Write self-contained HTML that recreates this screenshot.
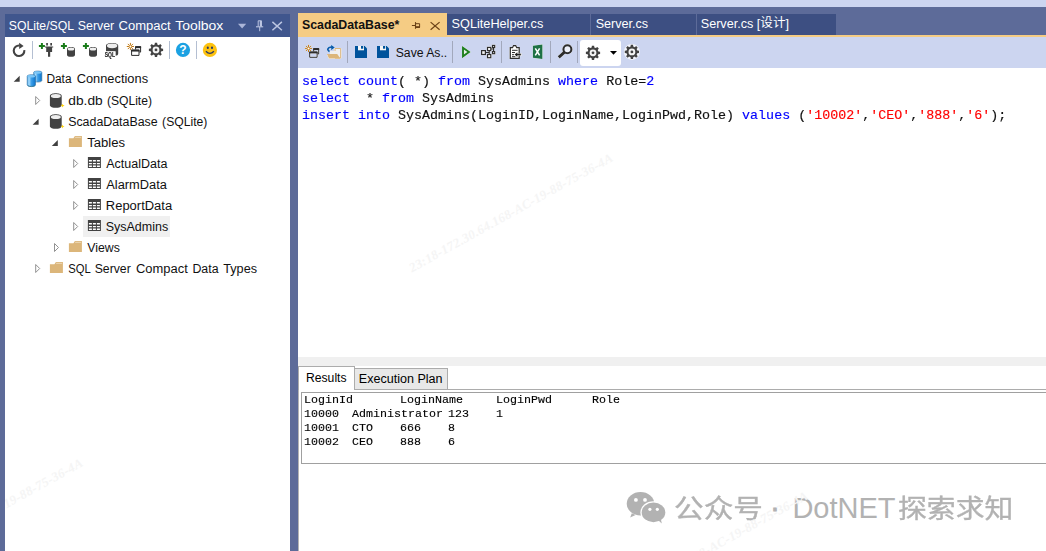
<!DOCTYPE html>
<html lang="zh">
<head>
<meta charset="utf-8">
<title>SQLite/SQL Server Compact Toolbox</title>
<style>
html,body{margin:0;padding:0;}
body{width:1046px;height:551px;overflow:hidden;position:relative;background:#5d6b99;
  font-family:"Liberation Sans","Noto Sans CJK SC",sans-serif;font-size:12px;color:#111;}
.abs{position:absolute;}
.t{position:absolute;white-space:pre;line-height:16px;transform-origin:0 0;}
.lbl{position:absolute;left:0;top:0;width:0;height:0;}
svg{position:absolute;overflow:visible;}
#topstrip{left:0;top:0;width:1046px;height:7px;background:#ccd5f0;}
#lp-title{left:5px;top:14px;width:285px;height:23px;background:#40568d;}
#lp-body{left:5px;top:37px;width:285px;height:514px;background:#fff;}
#ed-toolbar{left:298px;top:37px;width:748px;height:31px;background:#ccd5f0;}
#ed-body{left:298px;top:68px;width:748px;height:483px;background:#fff;}
#tabline{left:298px;top:35px;width:748px;height:2px;background:#f5cc84;}
.tab{position:absolute;top:14px;height:21px;background:#3d4f82;}
#tab1{left:298px;top:13px;width:149px;height:24px;background:#f5cc84;}
.code{font-family:"Liberation Mono",monospace;font-size:12.75px;line-height:17px;left:301.5px;transform:scaleX(1.0458);-webkit-text-stroke:0.15px;}
.kw{color:#0000ff;}
.str{color:#ff0000;}
.res{font-family:"Liberation Mono",monospace;font-size:11px;line-height:14px;color:#000;transform:scaleX(1.0606);-webkit-text-stroke:0.12px;}
.sep{position:absolute;width:1px;background:#8e9bbc;}
.wx{font-size:28.5px;line-height:40px;color:#b2b2b2;-webkit-text-stroke:0.35px #b2b2b2;}
.wm{position:absolute;white-space:pre;font-family:"Liberation Serif",serif;font-style:italic;font-weight:bold;font-size:13px;line-height:14px;letter-spacing:0.3px;color:#f5f5f5;transform-origin:0 50%;transform:rotate(-29deg);}
</style>
</head>
<body>
<div id="topstrip" class="abs"></div>

<!-- left tool window -->
<div id="lp-title" class="abs"></div>
<div id="lp-body" class="abs"></div>
<div id="selrow" class="abs" style="left:83px;top:216px;width:87px;height:21px;background:#f0f0f0;"></div>

<!-- editor -->
<div id="ed-toolbar" class="abs"></div>
<div id="ed-body" class="abs"></div>
<div id="tabline" class="abs"></div>
<div id="tab1" class="abs"></div>
<div id="tab2" class="tab" style="left:447px;width:143px;"></div>
<div id="tab3" class="tab" style="left:591px;width:105px;"></div>
<div id="tab4" class="tab" style="left:697px;width:139px;"></div>

<!-- results chrome -->
<div id="splitter" class="abs" style="left:298px;top:357px;width:748px;height:9px;background:#f0f0f0;"></div>
<div id="rleft" class="abs" style="left:298px;top:366px;width:1px;height:185px;background:#b4b4b4;"></div>
<div id="rtabline" class="abs" style="left:298px;top:389px;width:748px;height:1px;background:#acacac;"></div>
<div id="rtab2" class="abs" style="left:354px;top:368px;width:94px;height:21px;background:#e8e8e8;border:1px solid #acacac;border-bottom:none;box-sizing:border-box;"></div>
<div id="rtab1" class="abs" style="left:298px;top:366px;width:57px;height:24px;background:#fff;border:1px solid #acacac;border-bottom:none;box-sizing:border-box;"></div>
<div id="rbox" class="abs" style="left:301px;top:392px;width:760px;height:72px;background:#fff;border:1px solid #a0a0a0;box-sizing:border-box;"></div>

<svg id="icons" width="1046" height="551" viewBox="0 0 1046 551" style="left:0;top:0;">
<defs>
  <linearGradient id="cylg" x1="0" y1="0" x2="1" y2="0">
    <stop offset="0" stop-color="#4aa6ea"/><stop offset="0.22" stop-color="#a9dcfc"/><stop offset="0.5" stop-color="#3c9fe9"/><stop offset="1" stop-color="#0b74cc"/>
  </linearGradient>
  <g id="gear">
    <path fill="#424242" d="M-1.33 -5.34 L-1.13 -7.11 L1.13 -7.11 L1.33 -5.34 L2.84 -4.71 L4.23 -5.82 L5.82 -4.23 L4.71 -2.84 L5.34 -1.33 L7.11 -1.13 L7.11 1.13 L5.34 1.33 L4.71 2.84 L5.82 4.23 L4.23 5.82 L2.84 4.71 L1.33 5.34 L1.13 7.11 L-1.13 7.11 L-1.33 5.34 L-2.84 4.71 L-4.23 5.82 L-5.82 4.23 L-4.71 2.84 L-5.34 1.33 L-7.11 1.13 L-7.11 -1.13 L-5.34 -1.33 L-4.71 -2.84 L-5.82 -4.23 L-4.23 -5.82 L-2.84 -4.71Z"/>
    <circle r="3.4" fill="#f4f4f4"/>
    <circle r="1.4" fill="#424242"/>
  </g>
  <g id="plus"><path fill="#1a7c1a" d="M-1 -3H1V-1H3V1H1V3H-1V1H-3V-1H-1Z"/></g>
  <g id="cyl">
    <path fill="#424242" d="M0 2 C0 -0.6 8 -0.6 8 2 V8 C8 10.6 0 10.6 0 8Z"/>
    <ellipse cx="4" cy="2" rx="3.3" ry="1.5" fill="#f0f0f0"/>
  </g>
  <g id="dbicon">
    <path fill="#424242" d="M0 2.6 C0 -0.8 11.8 -0.8 11.8 2.6 V12 C11.8 15.4 0 15.4 0 12Z"/>
    <ellipse cx="5.9" cy="2.7" rx="5" ry="2" fill="#eeeeee"/>
    <path fill="#ffd20a" d="M12.7 10.4L13.3 11.7L14.7 12.3L13.3 12.9L12.7 14.2L12.1 12.9L10.7 12.3L12.1 11.7Z"/>
  </g>
  <g id="tbl">
    <rect x="0" y="0" width="13" height="11" fill="#424242"/>
    <path fill="#fff" d="M1 3H4V4.6H1Z M5 3H8V4.6H5Z M9 3H12V4.6H9Z M1 5.9H4V7.3H1Z M5 5.9H8V7.3H5Z M9 5.9H12V7.3H9Z M1 8.5H4V10H1Z M5 8.5H8V10H5Z M9 8.5H12V10H9Z"/>
  </g>
  <g id="folder"><path fill="#dcb67a" d="M0 2.2H4.5L6 0H13V11H0Z"/><path fill="#f3e6cf" d="M6.2 0.9H12.2V1.6H6.2Z"/></g>
  <g id="exp"><path fill="#404040" d="M6 0V6H0Z"/></g>
  <g id="col"><path fill="#fff" stroke="#929292" stroke-width="1" d="M0.5 0.5L4.5 4.5L0.5 8.5Z"/></g>
  <g id="newwin">
    <g stroke="#c27d1a" stroke-width="1" stroke-linecap="butt">
      <path d="M0 -3.6V3.6M-3.6 0H3.6M-2.6 -2.6L2.6 2.6M-2.6 2.6L2.6 -2.6"/>
    </g>
    <circle r="1" fill="#fff"/>
    <path fill="none" stroke="#2d2d2d" stroke-width="1" d="M5.2 3V0.2H10.2V5.6H9"/>
    <path stroke="#2d2d2d" stroke-width="1.9" d="M4.7 0.7H10.7"/>
    <path fill="none" stroke="#2d2d2d" stroke-width="1" d="M1.2 3.6H8.6V8.9H1.2Z"/>
    <path stroke="#2d2d2d" stroke-width="1.9" d="M0.7 4.1H9.1"/>
  </g>
  <g id="save">
    <path fill="#00539c" d="M0 0H9.8L12 2.2V12H0Z"/>
    <path fill="#f6f6f6" d="M3 0H9V4.3H3Z"/>
    <path fill="#00539c" d="M6 0H8.2V2.7H6Z"/>
  </g>
</defs>

<!-- left title bar icons -->
<g fill="#aab5d8" stroke="none">
  <path d="M238 23.8H246.2L242.1 28.4Z"/>
</g>
<g fill="none" stroke="#bcc6e2" stroke-width="1">
  <path d="M258.2 26.5V20.8H261.4V26.5"/>
  <path d="M260.8 20.8V26.5" stroke-width="2"/>
  <path d="M256 26.8H263.2" stroke-width="1.1"/>
  <path d="M259.7 27V31.2"/>
  <path d="M272.4 21.9L281.9 30.3M281.9 21.9L272.4 30.3" stroke-width="1.45"/>
</g>

<!-- left toolbar -->
<g>
  <path fill="none" stroke="#424242" stroke-width="2.1" d="M19.6 45.5A5.3 5.3 0 1 0 24.3 50.2"/>
  <path fill="#424242" d="M19.2 42.7V49L23.6 45.9Z"/>
  <rect x="32" y="41" width="1" height="18" fill="#b4bfd2"/>
  <!-- plug -->
  <use href="#plus" x="41.9" y="46"/>
  <path fill="#424242" d="M46.2 43H47.9V45.6H46.2Z M50.3 43H52V45.6H50.3Z M45 46.5H53.2V47.5H45Z M46.2 47.5H52.1V52H46.2Z M48 52H50.2V56.7H48Z"/>
  <!-- db+ x2 -->
  <use href="#plus" x="63.9" y="46"/>
  <use href="#cyl" x="67" y="46.9"/>
  <use href="#plus" x="85.9" y="46"/>
  <use href="#cyl" x="89" y="46.9"/>
  <!-- sql db -->
  <path fill="#424242" d="M106 45.6C106 42.2 118.2 42.2 118.2 45.6V53.5C118.2 55 117 55.6 115.6 55.8V51.3H106Z"/>
  <ellipse cx="112.1" cy="45.8" rx="5.2" ry="2.4" fill="#eeeeee"/>
  <rect x="104.2" y="51.6" width="11" height="5.8" fill="#fff"/><text x="104.7" y="57" font-family="Liberation Sans, sans-serif" font-weight="bold" font-size="6.4" fill="#1e1e1e" stroke="#1e1e1e" stroke-width="0.15" textLength="10.3" lengthAdjust="spacingAndGlyphs" style="filter:grayscale(1);">SQL</text>
  <!-- new window -->
  <use href="#newwin" x="130.4" y="46.5"/>
  <!-- gear -->
  <use href="#gear" x="156" y="49.9"/>
  <rect x="169" y="41" width="1" height="18" fill="#b4bfd2"/>
  <!-- help -->
  <circle cx="183" cy="49.9" r="7.1" fill="#1ba1e2"/>
  <text x="183" y="54.2" text-anchor="middle" font-family="Liberation Sans, sans-serif" font-weight="bold" font-size="12" fill="#fff">?</text>
  <rect x="196" y="41" width="1" height="18" fill="#b4bfd2"/>
  <!-- smiley -->
  <circle cx="209.9" cy="49.9" r="7.1" fill="#fdc20f"/>
  <ellipse cx="207.8" cy="47.8" rx="1.05" ry="1.3" fill="#2b3a67"/>
  <ellipse cx="212" cy="47.8" rx="1.05" ry="1.3" fill="#2b3a67"/>
  <path fill="none" stroke="#2b3a67" stroke-width="1.3" d="M205.9 51.3Q209.9 55.6 213.9 51.3"/>
</g>

<!-- tree icons -->
<g>
  <use href="#exp" x="13.7" y="75.8"/>
  <!-- data connections icon -->
  <g stroke="#2c6c9c" stroke-width="0.6">
    <path fill="url(#cylg)" d="M33.7 72.4C33.7 70.6 41.8 70.6 41.8 72.4V80.6C41.8 82.5 33.7 82.5 33.7 80.6Z"/>
    <ellipse cx="37.75" cy="72.5" rx="3.8" ry="1.2" fill="#7cc6f6" stroke="none"/>
    <path fill="url(#cylg)" d="M27.2 76.2C27.2 74.3 35.5 74.3 35.5 76.2V84.9C35.5 87 27.2 87 27.2 84.9Z"/>
    <ellipse cx="31.35" cy="76.3" rx="3.9" ry="1.2" fill="#7cc6f6" stroke="none"/>
  </g>
  <path fill="none" stroke="#3b8099" stroke-width="0.9" d="M28 85.6C29.5 86.9 33.3 86.9 34.8 85.6"/>

  <use href="#col" x="35.2" y="96"/>
  <use href="#dbicon" x="49.9" y="93.3"/>
  <use href="#exp" x="32.6" y="118.8"/>
  <use href="#dbicon" x="49.9" y="114.2"/>

  <use href="#exp" x="51.8" y="140"/>
  <use href="#folder" x="68.9" y="136"/>

  <use href="#col" x="73.2" y="159"/>
  <use href="#tbl" x="87.9" y="157"/>
  <use href="#col" x="73.2" y="180"/>
  <use href="#tbl" x="87.9" y="178"/>
  <use href="#col" x="73.2" y="201"/>
  <use href="#tbl" x="87.9" y="199"/>
  <use href="#col" x="73.2" y="222"/>
  <use href="#tbl" x="87.9" y="220"/>

  <use href="#col" x="54" y="243"/>
  <use href="#folder" x="68.9" y="241"/>
  <use href="#col" x="35.2" y="264"/>
  <use href="#folder" x="49.9" y="262"/>
</g>

<!-- active tab icons -->
<g fill="none" stroke="#6b4217" stroke-width="1">
  <path d="M411.9 25.5H415.3"/>
  <path d="M415.5 22.1V28.8" stroke-width="1.1"/>
  <path d="M415.5 23.7H419.6V27.2H415.5"/>
  <path d="M415.5 27.1H419.9" stroke-width="1.7"/>
  <path d="M430.6 22.1L439.6 29.8M439.6 22.1L430.6 29.8" stroke-width="1.2"/>
</g>

<!-- editor toolbar -->
<g style="filter:drop-shadow(0 0 0.5px #fff) drop-shadow(0 0 0.6px #fff);">
  <use href="#newwin" x="308.5" y="48.4"/>
  <!-- open folder -->
  <path fill="#f0f0f0" stroke="#dcb67a" stroke-width="1" d="M335 48.5H340.7V58.1H335Z"/>
  <path fill="#f0f0f0" d="M330 51H336V55H330Z"/>
  <path fill="#dcb67a" d="M326.9 54H337.2L340.4 58.6H329Z"/>
  <path fill="none" stroke="#0b5cad" stroke-width="1.8" d="M329.6 51.6C326 49.6 328.5 46.6 332 47.2"/>
  <path fill="#0b5cad" d="M331.2 44.7L334.8 47.5L331.2 50.2Z"/>
  <!-- save x2 -->
  <use href="#save" x="355" y="46"/>
  <use href="#save" x="377" y="46"/>
  <!-- play -->
  <path fill="#e6efe6" stroke="#1e7f1e" stroke-width="1.9" stroke-linejoin="miter" d="M463 47.8L469 52L463 56.3Z"/>
  <!-- diagram -->
  <g fill="#f4f4f4" stroke="#2d2d2d" stroke-width="1.2">
    <path fill="none" d="M485.6 52.5H489.2M489.2 50.7V54.4M491 49H493.6V47.5M493.6 47.5V51.5"/>
    <rect x="481.6" y="50.6" width="3.8" height="3.9"/>
    <rect x="487.5" y="47.4" width="3.3" height="3.2"/>
    <rect x="487.5" y="54.5" width="3.3" height="3.2"/>
    <rect x="492.5" y="45.4" width="2.2" height="2.1"/>
    <rect x="492.5" y="51.6" width="2.2" height="2.1"/>
  </g>
  <!-- clipboard -->
  <path fill="#fff" stroke="#2d2d2d" stroke-width="1.25" d="M510.3 47.7H512.5L513.5 45.5H515.7L516.7 47.7H519.2V58.3H510.3Z"/>
  <path fill="none" stroke="#2d2d2d" stroke-width="1" d="M512 50.3H517.6M512 52.5H515M512 54.7H514M512 56.7H515.4"/>
  <path fill="#1e1e1e" stroke="#fff" stroke-width="0.4" d="M514.4 54.6L517.5 51.9V53.6H521.2V55.6H517.5V57.3Z"/>
  <!-- excel -->
  <path fill="#1e7145" d="M532.9 45.7L542.4 44.6V58.9L532.9 57.8Z"/>
  <path fill="none" stroke="#fff" stroke-width="1.5" d="M535.3 48.4L539.6 55.4M539.6 48.4L535.3 55.4"/>
  <!-- magnifier -->
  <circle cx="567.4" cy="49.2" r="4" fill="#eef1fa" stroke="#2d2d2d" stroke-width="2.1"/>
  <path stroke="#2d2d2d" stroke-width="2.9" stroke-linecap="butt" d="M564.5 52.2L558.7 57.3"/>
</g>
<g fill="#a2a8bc">
  <rect x="347" y="41" width="1" height="22"/>
  <rect x="452" y="41" width="1" height="22"/>
  <rect x="501" y="41" width="1" height="22"/>
  <rect x="550" y="41" width="1" height="22"/>
  <rect x="577" y="41" width="1" height="22"/>
</g>
<rect x="580" y="40" width="41" height="26" rx="3" ry="3" fill="#fff"/>
<use href="#gear" x="593" y="52.8"/>
<path fill="#000" d="M610 51H613.5L617 51L613.5 54.8Z"/>
<circle cx="631.9" cy="51.9" r="8" fill="#f2f4fb"/>
<use href="#gear" x="631.9" y="51.9"/>

<!-- wechat -->
<g fill="#b2b2b2">
  <path d="M631.8 513.2L630.2 517.6L635.6 514.9Z"/>
  <ellipse cx="640.5" cy="503.7" rx="13.8" ry="11.7"/>
  <ellipse cx="653.5" cy="512.4" rx="13.1" ry="11.1" fill="#fff"/>
  <ellipse cx="653.5" cy="512.4" rx="11.8" ry="9.8"/>
  <path d="M658.5 520.6L661.8 523.4L660.9 519.2Z"/>
  <circle cx="635.9" cy="499.9" r="1.9" fill="#fff"/>
  <circle cx="645" cy="499.9" r="1.9" fill="#fff"/>
  <circle cx="649.9" cy="509.3" r="1.6" fill="#fff"/>
  <circle cx="657.3" cy="509.3" r="1.6" fill="#fff"/>
</g>
</svg>

<div class="lbl"><span id="ttl1" class="t" style="left:8px;top:18px;transform:translate(0.71px,0.10px) scaleX(1.0206);color:#fff;">SQLite/SQL</span> <span id="ttl2" class="t" style="left:77px;top:18px;transform:translate(0.74px,0.10px) scaleX(1.0317);color:#fff;">Server</span> <span id="ttl3" class="t" style="left:118px;top:18px;transform:translate(0.58px,0.10px) scaleX(1.0848);color:#fff;">Compact</span> <span id="ttl4" class="t" style="left:175px;top:18px;transform:translate(0.19px,0.10px) scaleX(1.1636);color:#fff;">Toolbox</span></div>
<div class="lbl"><span id="n0a" class="t" style="left:46px;top:71px;transform:translate(0.39px,0.10px) scaleX(0.9909);">Data</span> <span id="n0b" class="t" style="left:76px;top:71px;transform:translate(0.64px,0.10px) scaleX(1.0705);">Connections</span></div>
<div class="lbl"><span id="n1a" class="t" style="left:68px;top:93px;transform:translate(0.36px,0.10px) scaleX(1.1430);">db.db</span> <span id="n1b" class="t" style="left:106px;top:93px;transform:translate(0.88px,0.10px) scaleX(1.0085);">(SQLite)</span></div>
<div class="lbl"><span id="n2a" class="t" style="left:68px;top:114px;transform:translate(0.16px,0.10px) scaleX(1.0319);">ScadaDataBase</span> <span id="n2b" class="t" style="left:162px;top:114px;transform:translate(0.11px,0.10px) scaleX(1.0124);">(SQLite)</span></div>
<div class="lbl"><span id="n3" class="t" style="left:87px;top:135px;transform:translate(0.14px,0.10px) scaleX(1.0911);">Tables</span></div>
<div class="lbl"><span id="n4" class="t" style="left:106px;top:156px;transform:translate(0.25px,0.10px) scaleX(1.0406);">ActualData</span></div>
<div class="lbl"><span id="n5" class="t" style="left:106px;top:177px;transform:translate(0.25px,0.10px) scaleX(1.0686);">AlarmData</span></div>
<div class="lbl"><span id="n6" class="t" style="left:105px;top:198px;transform:translate(0.83px,0.10px) scaleX(1.0805);">ReportData</span></div>
<div class="lbl"><span id="n7" class="t" style="left:105px;top:219px;transform:translate(0.65px,0.10px) scaleX(1.0424);">SysAdmins</span></div>
<div class="lbl"><span id="n8" class="t" style="left:87px;top:240px;transform:translate(0.20px,0.10px) scaleX(1.0260);">Views</span></div>
<div class="lbl"><span id="n9a" class="t" style="left:68px;top:261px;transform:translate(0.13px,0.10px) scaleX(0.9378);">SQL</span> <span id="n9b" class="t" style="left:94px;top:261px;transform:translate(0.71px,0.10px) scaleX(1.0195);">Server</span> <span id="n9c" class="t" style="left:135px;top:261px;transform:translate(0.99px,0.10px) scaleX(1.0774);">Compact</span> <span id="n9d" class="t" style="left:192px;top:261px;transform:translate(0.42px,0.10px) scaleX(1.0297);">Data</span> <span id="n9e" class="t" style="left:223px;top:261px;transform:translate(0.25px,0.10px) scaleX(1.0548);">Types</span></div>
<div class="lbl"><span id="tt1" class="t" style="left:301px;top:17px;transform:translate(0.96px,0.00px) scaleX(1.0283);font-weight:bold;">ScadaDataBase*</span></div>
<div class="lbl"><span id="tt2" class="t" style="left:451px;top:16px;transform:translate(0.59px,0.10px) scaleX(1.0576);color:#fff;">SQLiteHelper.cs</span></div>
<div class="lbl"><span id="tt3" class="t" style="left:595px;top:16px;transform:translate(0.70px,0.10px) scaleX(1.0490);color:#fff;">Server.cs</span></div>
<div class="lbl"><span id="tt4" class="t" style="left:700px;top:16px;transform:translate(0.75px,0.10px) scaleX(1.0506);color:#fff;">Server.cs [<span style="position:relative;top:-0.8px;">设计</span>]</span></div>
<div class="lbl"><span id="saveas" class="t" style="left:395px;top:45px;transform:translate(0.72px,0.20px) scaleX(1.0164);">Save As..</span></div>
<div class="lbl"><span id="rt1" class="t" style="left:305px;top:369px;transform:translate(0.98px,0.60px) scaleX(1.0140);color:#000;">Results</span></div>
<div class="lbl"><span id="rt2" class="t" style="left:358px;top:370px;transform:translate(0.80px,0.60px) scaleX(1.0456);color:#000;">Execution Plan</span></div>

<!-- code -->
<div id="c1" class="t code" style="top:73px;"><span class="kw">select</span> <span class="kw">count</span>( *) <span class="kw">from</span> SysAdmins <span class="kw">where</span> Role=<span class="kw">2</span></div>
<div id="c2" class="t code" style="top:90px;"><span class="kw">select</span>  * <span class="kw">from</span> SysAdmins</div>
<div id="c3" class="t code" style="top:107px;"><span class="kw">insert</span> <span class="kw">into</span> SysAdmins(LoginID,LoginName,LoginPwd,Role) <span class="kw">values</span> (<span class="str">'10002'</span>,<span class="str">'CEO'</span>,<span class="str">'888'</span>,<span class="str">'6'</span>);</div>

<!-- results text -->
<div class="t res" style="left:304.2px;top:393.3px;">LoginId</div>
<div class="t res" style="left:400.2px;top:393.3px;">LoginName</div>
<div class="t res" style="left:496.2px;top:393.3px;">LoginPwd</div>
<div class="t res" style="left:592.2px;top:393.3px;">Role</div>
<div class="t res" style="left:304.2px;top:407.2px;">10000</div>
<div class="t res" style="left:352.2px;top:407.2px;">Administrator</div>
<div class="t res" style="left:448.2px;top:407.2px;">123</div>
<div class="t res" style="left:496.2px;top:407.2px;">1</div>
<div class="t res" style="left:304.2px;top:421px;">10001</div>
<div class="t res" style="left:352.2px;top:421px;">CTO</div>
<div class="t res" style="left:400.2px;top:421px;">666</div>
<div class="t res" style="left:448.2px;top:421px;">8</div>
<div class="t res" style="left:304.2px;top:434.9px;">10002</div>
<div class="t res" style="left:352.2px;top:434.9px;">CEO</div>
<div class="t res" style="left:400.2px;top:434.9px;">888</div>
<div class="t res" style="left:448.2px;top:434.9px;">6</div>

<!-- watermark -->
<div id="wx1" class="t wx" style="left:673.8px;top:488.8px;font-size:26.5px;letter-spacing:0px;transform:scaleX(1.118);">公众号</div>
<div id="wx2" class="t wx" style="left:770.3px;top:486.6px;-webkit-text-stroke:0.9px #b2b2b2;">·</div>
<div id="wx3" class="t wx" style="left:792.4px;top:487.6px;font-size:29px;-webkit-text-stroke:0;">DotNET</div>
<div id="wx4" class="t wx" style="left:898.3px;top:488.8px;font-size:26.5px;letter-spacing:0px;transform:scaleX(1.088);">探索求知</div>

<div class="abs" style="left:298px;top:68px;width:748px;height:483px;overflow:hidden;">
<div class="wm" id="wm1" style="left:112px;top:194px;">23:18-172.30.64.168-AC-19-88-75-36-4A</div>
<div class="wm" id="wm3" style="left:307px;top:531.5px;">23:18-172.30.64.168-AC-19-88-75-36-4A</div>
</div>
<div class="abs" style="left:5px;top:37px;width:285px;height:514px;overflow:hidden;">
<div class="wm" id="wm2" style="left:-125px;top:529.6px;">23:18-172.30.64.168-AC-19-88-75-36-4A</div>
</div>

</body>
</html>
